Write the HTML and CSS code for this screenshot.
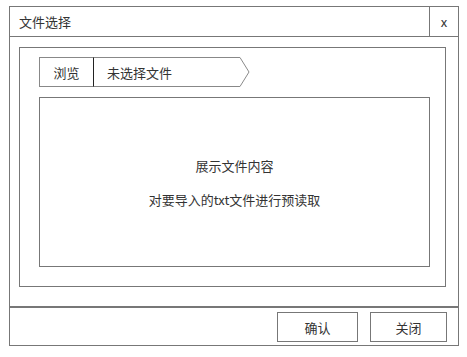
FILE: index.html
```html
<!DOCTYPE html>
<html lang="zh-CN">
<head>
    <meta charset="UTF-8">
    <title>文件选择</title>
    <link rel="stylesheet" href="styles.css">
</head>
<body>

    <div class="dialog">
        <div class="title-bar">
            <div class="title">文件选择</div>
            <div class="close">x</div>
        </div>

        <div class="dialog-body">
            <div class="panel">
                <div class="file-picker">
                    <div class="browse">浏览</div>
                    <div class="file-name">未选择文件</div>
                    <svg class="file-arrow" width="11" height="30" viewBox="0 0 11 30">
                        <path d="M0 0.5 H1 L10 15 L1 29.5 H0" fill="none" stroke="#8a8a8a" stroke-width="1"/>
                    </svg>
                </div>
                <div class="preview">
                    <p>展示文件内容</p>
                    <p>对要导入的txt文件进行预读取</p>
                </div>
            </div>
        </div>

        <div class="footer">
            <div class="btn btn-ok">确认</div>
            <div class="btn btn-close">关闭</div>
        </div>
    </div>

</body>
</html>
```

FILE: styles.css
```css
body {
    font-family: "Noto Sans CJK SC", "Liberation Sans", sans-serif;
    font-size: 13px;
    color: #333;
    background: #fff;
    margin: 0;
}

.dialog {
    width: 450px;
    height: 340px;
    margin: 6px 0 0 9px;
    border: 1px solid #777;
    box-sizing: border-box;
    display: flex;
    flex-direction: column;
}

.title-bar {
    height: 29px;
    border-bottom: 1px solid #777;
    display: flex;
    align-items: stretch;
    flex-shrink: 0;
}

.title {
    flex: 1;
    padding-left: 9px;
    display: flex;
    align-items: center;
}

.close {
    width: 28px;
    border-left: 1px solid #777;
    display: flex;
    align-items: center;
    justify-content: center;
}

.dialog-body {
    height: 269px;
    padding: 10px 0 0 9px;
    box-sizing: border-box;
    flex-shrink: 0;
}

.panel {
    width: 427px;
    height: 240px;
    border: 1px solid #777;
    box-sizing: border-box;
    padding: 9px 0 0 19px;
}

.file-picker {
    display: flex;
    height: 30px;
}

.browse {
    width: 55px;
    border: 1px solid #888;
    border-right-color: #222;
    box-sizing: border-box;
    display: flex;
    align-items: center;
    justify-content: center;
}

.file-name {
    width: 145px;
    border-top: 1px solid #888;
    border-bottom: 1px solid #888;
    box-sizing: border-box;
    padding-left: 13px;
    display: flex;
    align-items: center;
}

.file-arrow {
    display: block;
}

.preview {
    width: 391px;
    height: 170px;
    margin-top: 10px;
    border: 1px solid #777;
    box-sizing: border-box;
    display: flex;
    flex-direction: column;
    align-items: center;
    justify-content: center;
    gap: 15px;
}

.preview p {
    margin: 0;
    line-height: 19px;
}

.footer {
    height: 40px;
    border-top: 2px solid #777;
    box-sizing: border-box;
    display: flex;
    justify-content: flex-end;
    align-items: flex-start;
    gap: 12px;
    padding: 4px 11px 0 0;
}

.btn {
    height: 30px;
    border: 1px solid #777;
    box-sizing: border-box;
    display: flex;
    align-items: center;
    justify-content: center;
}

.btn-ok {
    width: 81px;
}

.btn-close {
    width: 77px;
}
```
